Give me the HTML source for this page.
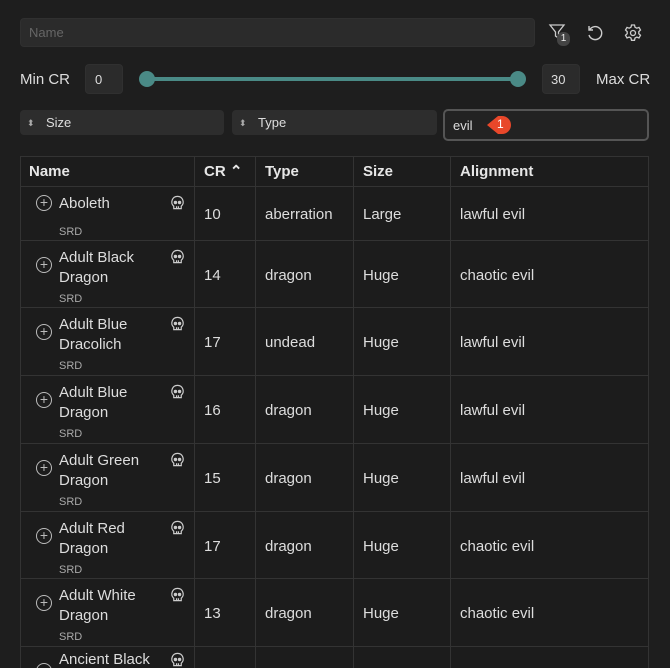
<!DOCTYPE html>
<html style="width:670px;height:668px;overflow:hidden"><head><style>
*{margin:0;padding:0;box-sizing:border-box}
body{width:670px;height:668px;background:#1e1e1e;font-family:"Liberation Sans",sans-serif;color:#ddd;position:relative;overflow:hidden}
.a{position:absolute}
.inp{background:#2b2b2b;border:1px solid #303030;border-radius:4px}
.t{font-size:14px;line-height:18px;white-space:nowrap}
.cell{position:absolute;border-right:1px solid #333;border-bottom:1px solid #333}
</style></head><body>
<div class="a inp" style="left:20px;top:18px;width:515px;height:29px"></div>
<div class="a t" style="left:29px;top:24px;color:#666;font-size:13px">Name</div>
<svg class="a" style="left:548px;top:22px" width="24" height="24" viewBox="0 0 24 24" fill="none" stroke="#ccc" stroke-width="1.3"><path d="M2 3h14l-5.5 7v6l-3-2v-4z"/></svg>
<div class="a" style="left:557px;top:32px;width:13px;height:14px;border-radius:6px;background:#444;color:#eee;font-size:10px;text-align:center;line-height:14px">1</div>
<svg class="a" style="left:585px;top:23px" width="20" height="20" viewBox="0 0 20 20" fill="none" stroke="#ccc" stroke-width="1.4"><path d="M4.5 7A6.5 6.5 0 1 1 4 12"/><path d="M4 3v4h4"/></svg>
<svg class="a" style="left:623px;top:23px" width="20" height="20" viewBox="0 0 20 20" fill="none" stroke="#ccc" stroke-width="1.3"><circle cx="10" cy="10" r="2.5"/><path d="M8.5 2h3l.5 2.2 1.8 1 2.2-.8 1.5 2.6-1.7 1.6v2.1l1.7 1.6-1.5 2.6-2.2-.8-1.8 1-.5 2.2h-3l-.5-2.2-1.8-1-2.2.8-1.5-2.6 1.7-1.6V8.6L2.5 7l1.5-2.6 2.2.8 1.8-1z"/></svg>
<div class="a t" style="left:20px;top:71px;font-size:15px">Min CR</div>
<div class="a inp" style="left:85px;top:64px;width:38px;height:30px"></div>
<div class="a t" style="left:95px;top:71px;font-size:13px">0</div>
<div class="a" style="left:146px;top:77px;width:372px;height:4px;background:#4a8a86"></div>
<div class="a" style="left:139px;top:71px;width:16px;height:16px;border-radius:8px;background:#4a8a86"></div>
<div class="a" style="left:510px;top:71px;width:16px;height:16px;border-radius:8px;background:#4a8a86"></div>
<div class="a inp" style="left:542px;top:64px;width:38px;height:30px"></div>
<div class="a t" style="left:551px;top:71px;font-size:13px">30</div>
<div class="a t" style="left:596px;top:71px;font-size:15px">Max CR</div>
<div class="a inp" style="left:20px;top:110px;width:204px;height:25px;background:#2d2d2d;border:none"></div>
<div class="a t" style="left:27px;top:114px;font-size:9px;color:#aaa">⬍</div>
<div class="a t" style="left:46px;top:114px;font-size:13px">Size</div>
<div class="a inp" style="left:232px;top:110px;width:205px;height:25px;background:#2d2d2d;border:none"></div>
<div class="a t" style="left:239px;top:114px;font-size:9px;color:#aaa">⬍</div>
<div class="a t" style="left:258px;top:114px;font-size:13px">Type</div>
<div class="a" style="left:443px;top:109px;width:206px;height:32px;border:2px solid #555;border-radius:5px;background:#222"></div>
<div class="a t" style="left:453px;top:117px;font-size:13px">evil</div>
<svg class="a" style="left:484px;top:113px" width="32" height="24"><path d="M3 12L14 3h4a9 9 0 0 1 0 18h-4z" fill="#e8472a"/></svg>
<div class="a t" style="left:497px;top:115px;font-size:12px;color:#fff">1</div>
<div class="a" style="left:20px;top:156px;width:629px;height:512px;border:1px solid #333;border-bottom:none;background:#1c1c1c"></div>
<div id="tb"></div>
<script>
const cols=[20,195,256,354,451,649];
const hdr=["Name","CR ⌃","Type","Size","Alignment"];
let h='';
for(let i=0;i<5;i++){h+=`<div class="cell" style="left:${cols[i]}px;top:156px;width:${cols[i+1]-cols[i]}px;height:31px;${i==4?'border-right:none':''}"></div><div class="a t" style="left:${cols[i]+9}px;top:163px;font-weight:bold;font-size:15px;color:#e6e6e6">${hdr[i]}</div>`;}
const rows=[["Aboleth","","10","aberration","Large","lawful evil"],["Adult Black","Dragon","14","dragon","Huge","chaotic evil"],["Adult Blue","Dracolich","17","undead","Huge","lawful evil"],["Adult Blue","Dragon","16","dragon","Huge","lawful evil"],["Adult Green","Dragon","15","dragon","Huge","lawful evil"],["Adult Red","Dragon","17","dragon","Huge","chaotic evil"],["Adult White","Dragon","13","dragon","Huge","chaotic evil"]];
const tops=[187,241,308,376,444,512,579,647];
const skull=`<svg width="15" height="15" viewBox="0 0 16 16" fill="none" stroke="#ccc" stroke-width="1.3"><path d="M8 1.5a6 6 0 0 0-4 10.5v2.5h8V12a6 6 0 0 0-4-10.5z"/><circle cx="5.8" cy="8" r="1.2" fill="#ccc"/><circle cx="10.2" cy="8" r="1.2" fill="#ccc"/><path d="M7 14v-2M9 14v-2"/></svg>`;
rows.forEach((r,k)=>{const y=tops[k],H=tops[k+1]-y,one=!r[1];
for(let i=0;i<5;i++)h+=`<div class="cell" style="left:${cols[i]}px;top:${y}px;width:${cols[i+1]-cols[i]}px;height:${H}px;${i==4?'border-right:none':''}"></div>`;
const c=one?16:24;
h+=`<div class="a" style="left:36px;top:${y+c-8}px;width:16px;height:16px;border:1.3px solid #bbb;border-radius:50%;color:#bbb;font-size:14px;line-height:13px;text-align:center">+</div>`;
h+=`<div class="a" style="left:170px;top:${y+8}px">${skull}</div>`;
h+=`<div class="a t" style="left:59px;top:${y+8}px;font-size:15px">${r[0]}</div>`;
if(!one)h+=`<div class="a t" style="left:59px;top:${y+28}px;font-size:15px">${r[1]}</div>`;
h+=`<div class="a t" style="left:59px;top:${y+(one?36:49)}px;font-size:11px;color:#aaa">SRD</div>`;
const m=one?27:34;
[r[2],r[3],r[4],r[5]].forEach((v,j)=>{h+=`<div class="a t" style="left:${cols[j+1]+9}px;top:${y+m-8}px;font-size:15px">${v}</div>`});
});
for(let i=0;i<4;i++)h+=`<div class="a" style="left:${cols[i+1]-1}px;top:647px;width:1px;height:21px;background:#333"></div>`;
h+=`<div class="a" style="left:170px;top:652px;height:15px;overflow:hidden">${skull}</div>`;
h+=`<div class="a t" style="left:59px;top:651px;font-size:15px;height:17px;overflow:hidden">Ancient Black</div>`;
h+=`<div class="a" style="left:36px;top:663px;width:16px;height:5px;overflow:hidden"><div style="width:16px;height:16px;border:1.3px solid #bbb;border-radius:50%"></div></div>`;
document.getElementById('tb').innerHTML=h;
</script>
</body></html>
